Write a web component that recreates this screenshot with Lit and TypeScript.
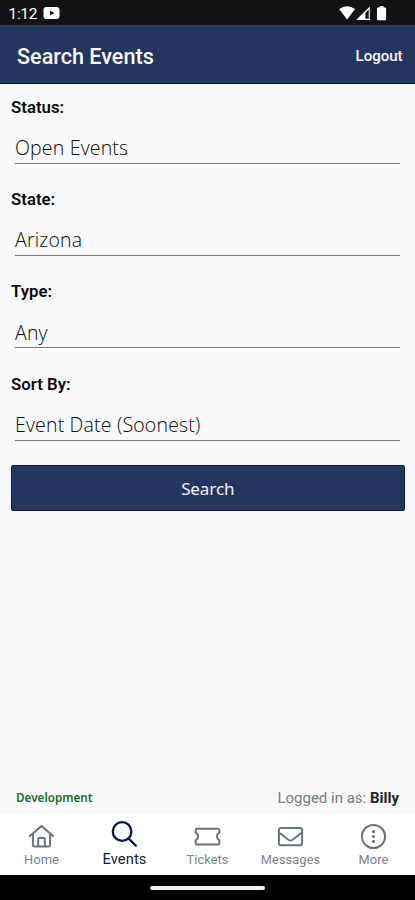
import { LitElement, html, css, svg } from "lit";
import { customElement, property } from "lit/decorators.js";
import { classMap } from "lit/directives/class-map.js";

const icons: Record<string, unknown> = {
  home: svg`<path d="M1.900 13.100 13.500 3l11.600 10.100M4.900 11v11.300q0 1.200 1.200 1.200h14.800q1.200 0 1.200-1.200V11M10.200 23.200v-7.400q0-.8.8-.8h5q.8 0 .8.800v7.400"/>`,
  search: svg`<circle cx="11.1" cy="11.500" r="9.300"/><path d="m17.700 18.600 7.200 7.200"/>`,
  ticket: svg`<path d="M3 5.800h21q1.300 0 1.300 1.300v2.600c-3.200 2-3.200 5.600 0 7.600v3q0 1.300-1.300 1.300H3q-1.300 0-1.300-1.300v-3c3.200-2 3.200-5.600 0-7.600V7.100q0-1.300 1.300-1.300Z"/>`,
  mail: svg`<rect x="1.9" y="4.900" width="23.200" height="17.300" rx="2"/><path d="m2 9.500 9.400 7.300q2.100 1.500 4.200 0L25 9.500"/>`,
  more: svg`<circle cx="13.5" cy="13.500" r="11.600"/><g class="dots"><circle cx="13.5" cy="8.600" r="1.600"/><circle cx="13.5" cy="13.500" r="1.600"/><circle cx="13.5" cy="18.400" r="1.600"/></g>`,
};

@customElement("status-bar")
class StatusBar extends LitElement {
  static styles = css`
    :host { display: flex; height: 25px; box-sizing: border-box; align-items: center; background: #131313; color: #fff; padding: 2px 28px 0 8.500px; font: 400 15.500px/23px Roboto, sans-serif; }
    .clock { width: 34px; letter-spacing: -0.300px; padding-top: 1px; }
    .spacer { flex: 1; }
    svg { display: block; }
    .notification { margin-top: -1px; }
    .system { margin: -1px 0 0; }
  `;
  render() {
    return html`
      <span class="clock">1:12</span>
      <svg class="notification" width="18" height="14" viewBox="0 0 18 14"><rect x=".5" y="1" width="16" height="12" rx="3" fill="#fff"/><path d="m7 4.700 4.500 2.300-4.500 2.300z" fill="#131313"/></svg>
      <span class="spacer"></span>
      <svg class="system" width="48" height="16" viewBox="0 0 48 16" fill="#fff">
        <path d="M.2 4Q8 -1.700 16 4L8.100 14.500Z"/>
        <path fill-rule="evenodd" d="M30.800 1.500V15H17.100ZM29.700 4.500 26.400 7.800V13.700H29.700Z"/>
        <path d="M38.700 2.500h1.900V1.100h3.900v1.400h1.900q.7 0 .7.700v11q0 1-1 1h-7.100q-1 0-1-1v-11q0-.7.700-.7Z"/>
      </svg>`;
  }
}

@customElement("select-field")
class SelectField extends LitElement {
  @property() label = "";
  @property() value = "";
  static styles = css`
    :host { display: block; height: 92.400px; color: #0b0c0e; }
    .label { font: 600 16.800px/19.500px Roboto, sans-serif; height: 21px; }
    .value { margin: 1.500px 5px 0 4px; height: 43.500px; box-sizing: border-box; border-bottom: 1px solid #77797b; font: 350 19.500px/55px "Open Sans", sans-serif; letter-spacing: 0.180px; color: #08090a; white-space: nowrap; }
  `;
  render() {
    return html`<div class="label">${this.label}</div><div class="value">${this.value}</div>`;
  }
}

@customElement("nav-item")
class NavItem extends LitElement {
  @property() label = "";
  @property() icon = "";
  @property({ type: Boolean }) active = false;
  static styles = css`
    :host { flex: 1 1 0; min-width: 0; }
    .item { display: flex; flex-direction: column; align-items: center; color: #69737d; padding-top: 9px; }
    .label { font: 400 12.800px/20px Roboto, sans-serif; letter-spacing: 0.100px; white-space: nowrap; color: #7b838a; }
    svg { width: 27px; height: 27px; fill: none; stroke: currentColor; stroke-width: 2; stroke-linecap: round; stroke-linejoin: round; }
    .dots { fill: currentColor; stroke: none; }
    .active { color: #0b1648; padding-top: 6px; }
    .active svg { height: 28px; stroke-width: 2.300; }
    .active .label { font-size: 14.700px; line-height: 23px; color: #101a4c; letter-spacing: 0.100px; }
  `;
  render() {
    return html`<div class=${classMap({ item: true, active: this.active })}>
      <svg viewBox=${this.active ? "0 0 27 28" : "0 0 27 27"}>${icons[this.icon]}</svg>
      <span class="label">${this.label}</span>
    </div>`;
  }
}

@customElement("app-root")
class AppRoot extends LitElement {
  static styles = css`
    :host { display: flex; flex-direction: column; width: 100%; height: 900px; background: #f8f9fb; overflow: hidden; }
    header { height: 59px; box-sizing: border-box; background: #24365e; border-bottom: 1px solid #07104a; color: #f8f8ff; display: flex; align-items: center; justify-content: space-between; padding: 4px 12.500px 0 17px; font-family: Roboto, sans-serif; font-weight: 500; }
    .title { font-size: 21.600px; }
    .logout { font-size: 15px; }
    main { flex: 1; padding: 13.500px 10.500px 0 11px; }
    .search { display: block; width: 100%; height: 46px; margin-top: -1.600px; padding: 2px 0 0; border: 1px solid #10194d; border-radius: 2px; background: #24365e; color: #f2f5ff; font: 400 17px/20px "Noto Sans", sans-serif; letter-spacing: -0.100px; }
    .session { display: flex; justify-content: space-between; align-items: center; height: 32px; padding: 0 16px; font: 400 15px/32px Roboto, sans-serif; color: #747b83; }
    .env { font: 600 11.700px/30px "Noto Sans", sans-serif; padding-bottom: 2px; color: #23692b; }
    b { font-weight: 700; color: #20262e; }
    nav { display: flex; height: 61px; background: #fff; }
    .gesture { display: flex; justify-content: center; align-items: center; height: 25px; background: #000; }
    .pill { width: 115px; height: 4px; border-radius: 2px; background: #f2f2f2; }
  `;
  render() {
    return html`
      <status-bar></status-bar>
      <header><span class="title">Search Events</span><span class="logout">Logout</span></header>
      <main>
        <select-field label="Status:" value="Open Events"></select-field>
        <select-field label="State:" value="Arizona"></select-field>
        <select-field label="Type:" value="Any"></select-field>
        <select-field label="Sort By:" value="Event Date (Soonest)"></select-field>
        <button class="search">Search</button>
      </main>
      <div class="session"><span class="env">Development</span><span class="user">Logged in as: <b>Billy</b></span></div>
      <nav>
        <nav-item icon="home" label="Home"></nav-item>
        <nav-item icon="search" label="Events" active></nav-item>
        <nav-item icon="ticket" label="Tickets"></nav-item>
        <nav-item icon="mail" label="Messages"></nav-item>
        <nav-item icon="more" label="More"></nav-item>
      </nav>
      <div class="gesture"><div class="pill"></div></div>`;
  }
}
